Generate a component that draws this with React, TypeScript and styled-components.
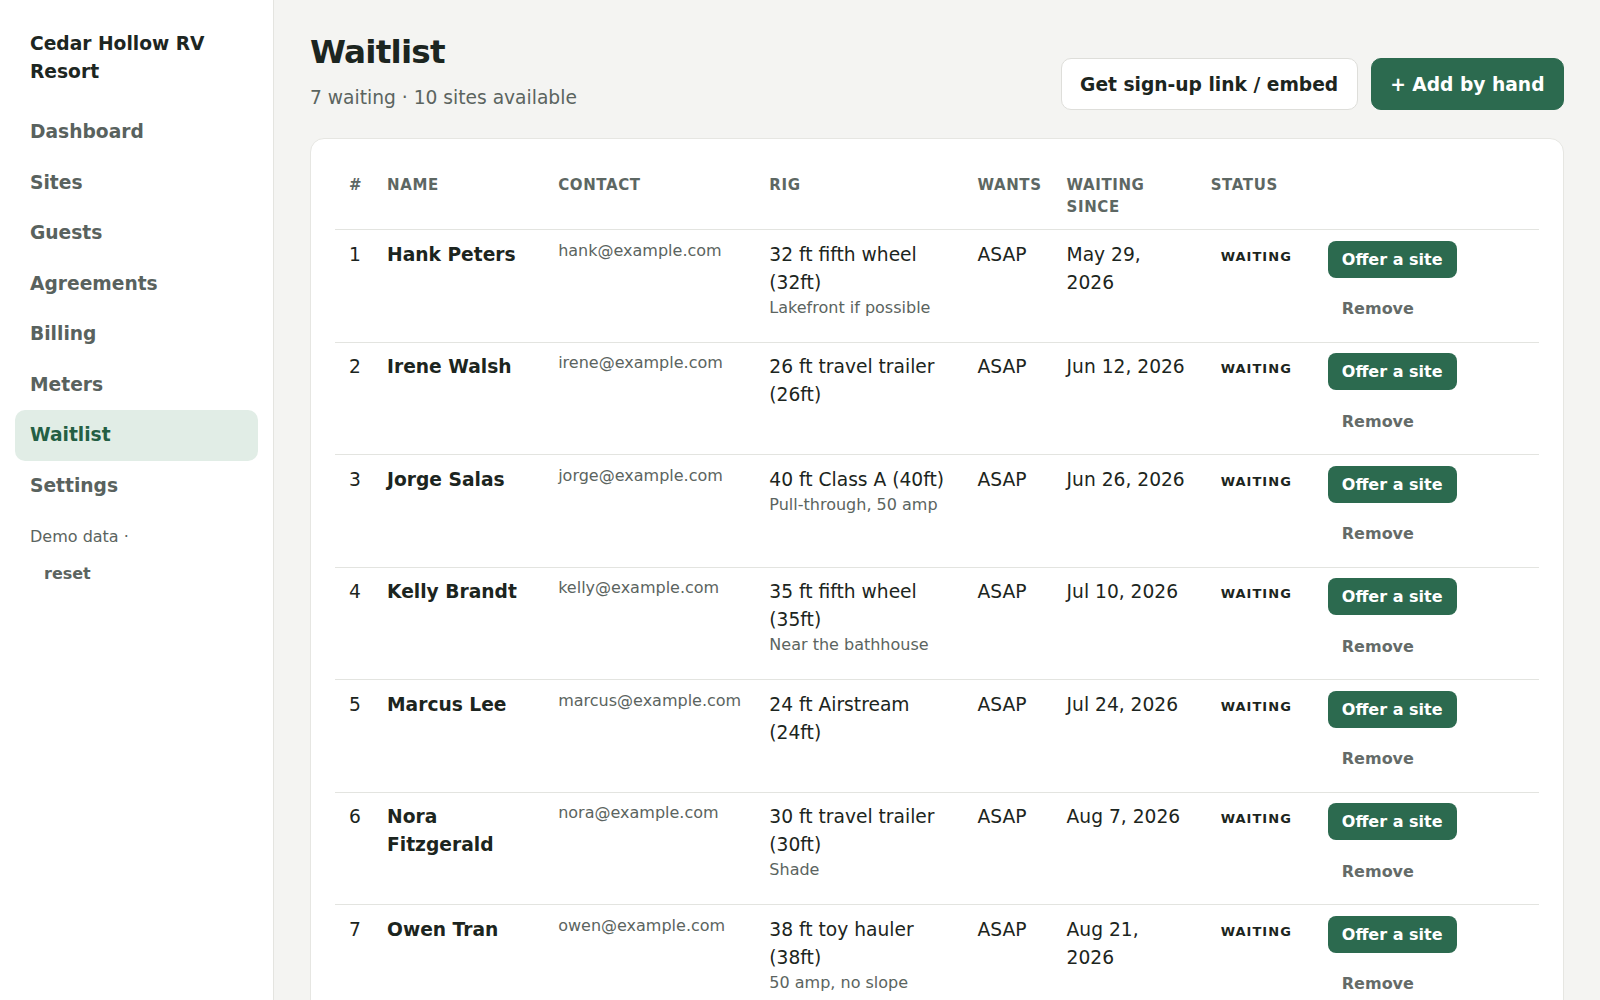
import React from "react";
import styled, { createGlobalStyle } from "styled-components";

const GlobalStyle = createGlobalStyle`
  * {
    box-sizing: border-box;
  }
  body {
    margin: 0;
    font-family: "DejaVu Sans", "Liberation Sans", sans-serif;
    background: #f4f4f2;
    color: #1c2520;
  }
`;

type Entry = {
  name: string;
  email: string;
  rig: string;
  note?: string;
  wants: string;
  since: string;
};

const entries: Entry[] = [
  { name: "Hank Peters", email: "hank@example.com", rig: "32 ft fifth wheel (32ft)", note: "Lakefront if possible", wants: "ASAP", since: "May 29, 2026" },
  { name: "Irene Walsh", email: "irene@example.com", rig: "26 ft travel trailer (26ft)", wants: "ASAP", since: "Jun 12, 2026" },
  { name: "Jorge Salas", email: "jorge@example.com", rig: "40 ft Class A (40ft)", note: "Pull-through, 50 amp", wants: "ASAP", since: "Jun 26, 2026" },
  { name: "Kelly Brandt", email: "kelly@example.com", rig: "35 ft fifth wheel (35ft)", note: "Near the bathhouse", wants: "ASAP", since: "Jul 10, 2026" },
  { name: "Marcus Lee", email: "marcus@example.com", rig: "24 ft Airstream (24ft)", wants: "ASAP", since: "Jul 24, 2026" },
  { name: "Nora Fitzgerald", email: "nora@example.com", rig: "30 ft travel trailer (30ft)", note: "Shade", wants: "ASAP", since: "Aug 7, 2026" },
  { name: "Owen Tran", email: "owen@example.com", rig: "38 ft toy hauler (38ft)", note: "50 amp, no slope", wants: "ASAP", since: "Aug 21, 2026" },
];

const navItems = ["Dashboard", "Sites", "Guests", "Agreements", "Billing", "Meters", "Waitlist", "Settings"];

const Layout = styled.div`
  display: flex;
  min-height: 100vh;
`;

const Sidebar = styled.aside`
  width: 274px;
  flex-shrink: 0;
  background: #ffffff;
  border-right: 1px solid #e4e4e0;
  padding: 30px 15px 24px;
`;

const Brand = styled.div`
  font-size: 18.67px;
  line-height: 28px;
  font-weight: 700;
  color: #1d2622;
  padding: 0 15px;
  margin-bottom: 21px;
`;

const Nav = styled.nav`
  display: flex;
  flex-direction: column;
`;

const NavItem = styled.a<{ $active?: boolean }>`
  display: block;
  padding: 11.25px 15px;
  border-radius: 10px;
  font-size: 18.67px;
  line-height: 28px;
  font-weight: 700;
  text-decoration: none;
  color: ${(p) => (p.$active ? "#245f44" : "#59625e")};
  background: ${(p) => (p.$active ? "#e1ede6" : "transparent")};
`;

const SidebarFooter = styled.div`
  margin-top: 14px;
  padding: 0 15px;
  font-size: 16px;
  line-height: 24px;
  color: #5b6460;
`;

const ResetButton = styled.button`
  display: block;
  margin-top: 7px;
  padding: 6px 14px;
  border: none;
  background: transparent;
  font-family: inherit;
  font-size: 16px;
  line-height: 24px;
  font-weight: 700;
  color: #5b6460;
`;

const Main = styled.main`
  flex: 1;
  min-width: 0;
  padding: 33px 36px 40px;
`;

const PageHeader = styled.header`
  display: flex;
  justify-content: space-between;
  align-items: flex-end;
  margin-bottom: 26px;
`;

const Title = styled.h1`
  margin: 0;
  font-size: 32.67px;
  line-height: 1.2;
  font-weight: 700;
  letter-spacing: -0.8px;
  color: #1c2520;
`;

const Subtitle = styled.p`
  margin: 12px 0 0;
  font-size: 18.67px;
  line-height: 28px;
  color: #5b6460;
`;

const Actions = styled.div`
  display: flex;
  gap: 13px;
  margin-bottom: 2px;
`;

const HeaderButton = styled.button<{ $primary?: boolean }>`
  padding: 11.5px 18.5px;
  border-radius: 10px;
  border: 1px solid ${(p) => (p.$primary ? "#2c6a4f" : "#dededa")};
  background: ${(p) => (p.$primary ? "#2c6a4f" : "#ffffff")};
  color: ${(p) => (p.$primary ? "#ffffff" : "#1c2520")};
  font-family: inherit;
  font-size: 18.67px;
  line-height: 27px;
  font-weight: 700;
`;

const Card = styled.section`
  background: #ffffff;
  border: 1px solid #e6e6e2;
  border-radius: 14px;
  padding: 23px 24px 0;
`;

const Table = styled.table`
  width: 100%;
  border-collapse: collapse;
  table-layout: fixed;
`;

const Th = styled.th`
  padding: 12px 10px 11px 14px;
  text-align: left;
  vertical-align: top;
  font-size: 15px;
  line-height: 22px;
  font-weight: 700;
  letter-spacing: 0.04em;
  text-transform: uppercase;
  color: #5d6763;
  border-bottom: 1px solid #e3e4e0;
`;

const Td = styled.td`
  padding: 10.5px 10px 13.5px 14px;
  vertical-align: top;
  font-size: 18.67px;
  line-height: 28px;
  color: #1c2520;
  border-bottom: 1px solid #e3e4e0;
`;

const Name = styled.span`
  font-weight: 700;
`;

const Email = styled.div`
  font-size: 16px;
  line-height: 19px;
  color: #5b6460;
`;

const Note = styled.div`
  font-size: 16px;
  line-height: 22.4px;
  color: #5b6460;
`;

const StatusBadge = styled.span`
  display: inline-block;
  padding: 1px 10px 3px;
  font-size: 13px;
  line-height: 20px;
  font-weight: 700;
  letter-spacing: 0.08em;
  text-transform: uppercase;
  color: #1c2520;
`;

const RowActions = styled.div`
  display: flex;
  flex-direction: column;
  align-items: flex-start;
  gap: 12px;
`;

const OfferButton = styled.button`
  padding: 6px 14px;
  border: none;
  border-radius: 8px;
  background: #2c6a4f;
  color: #ffffff;
  font-family: inherit;
  font-size: 16px;
  line-height: 25px;
  font-weight: 700;
`;

const RemoveButton = styled.button`
  padding: 7.5px 14px 7px;
  border: none;
  background: transparent;
  color: #646b68;
  font-family: inherit;
  font-size: 16px;
  line-height: 24px;
  font-weight: 700;
`;

const columns = [38, 171, 211, 208, 89, 144, 117, 225];

export default function App() {
  return (
    <>
      <GlobalStyle />
      <Layout>
        <Sidebar>
          <Brand>Cedar Hollow RV Resort</Brand>
          <Nav>
            {navItems.map((item) => (
              <NavItem key={item} href="#" $active={item === "Waitlist"}>
                {item}
              </NavItem>
            ))}
          </Nav>
          <SidebarFooter>
            Demo data ·
            <ResetButton>reset</ResetButton>
          </SidebarFooter>
        </Sidebar>

        <Main>
          <PageHeader>
            <div>
              <Title>Waitlist</Title>
              <Subtitle>7 waiting · 10 sites available</Subtitle>
            </div>
            <Actions>
              <HeaderButton>Get sign-up link / embed</HeaderButton>
              <HeaderButton $primary>+ Add by hand</HeaderButton>
            </Actions>
          </PageHeader>

          <Card>
            <Table>
              <colgroup>
                {columns.map((w, i) => (
                  <col key={i} style={{ width: w }} />
                ))}
              </colgroup>
              <thead>
                <tr>
                  <Th>#</Th>
                  <Th>Name</Th>
                  <Th>Contact</Th>
                  <Th>Rig</Th>
                  <Th>Wants</Th>
                  <Th>Waiting since</Th>
                  <Th>Status</Th>
                  <Th />
                </tr>
              </thead>
              <tbody>
                {entries.map((e, i) => (
                  <tr key={e.email}>
                    <Td>{i + 1}</Td>
                    <Td>
                      <Name>{e.name}</Name>
                    </Td>
                    <Td>
                      <Email>{e.email}</Email>
                    </Td>
                    <Td>
                      {e.rig}
                      {e.note && <Note>{e.note}</Note>}
                    </Td>
                    <Td>{e.wants}</Td>
                    <Td>{e.since}</Td>
                    <Td>
                      <StatusBadge>Waiting</StatusBadge>
                    </Td>
                    <Td>
                      <RowActions>
                        <OfferButton>Offer a site</OfferButton>
                        <RemoveButton>Remove</RemoveButton>
                      </RowActions>
                    </Td>
                  </tr>
                ))}
              </tbody>
            </Table>
          </Card>
        </Main>
      </Layout>
    </>
  );
}
